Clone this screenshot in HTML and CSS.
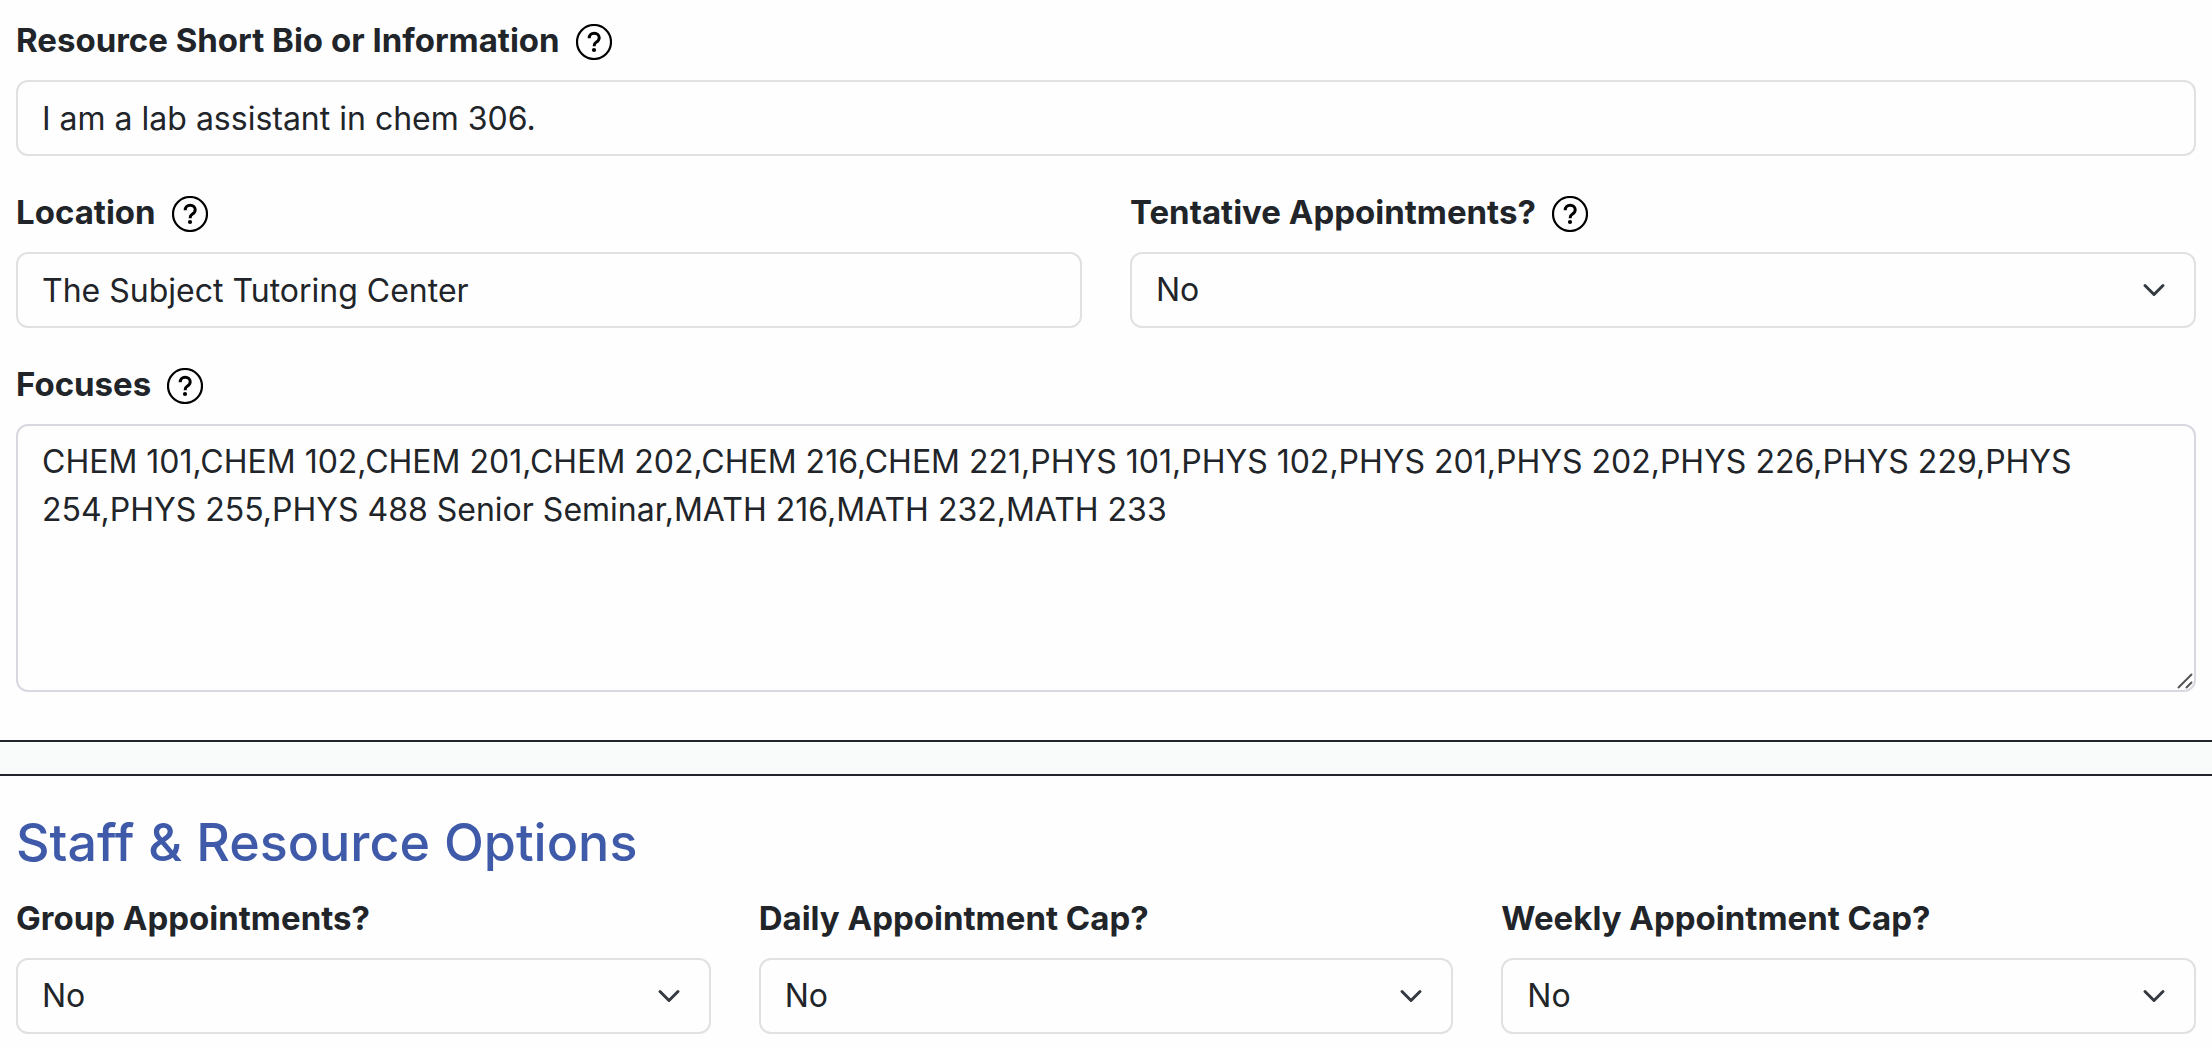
FILE: index.html
```html
<!DOCTYPE html>
<html lang="en">
<head>
<meta charset="utf-8">
<meta name="viewport" content="width=device-width, initial-scale=1">
<title>Staff &amp; Resource Options</title>
<link rel="stylesheet" href="styles.css">
</head>
<body>
<svg class="sprite" aria-hidden="true">
  <symbol id="help-icon" viewBox="0 0 36 36">
    <circle cx="18" cy="18" r="17" fill="none" stroke="currentColor" stroke-width="2.2"/>
    <path d="M13.200 14.200c0-3 2-4.900 5-4.900s5 1.800 5 4.500c0 2-1 3.200-2.700 4.300-1.700 1.100-2.300 1.900-2.300 3.600v.6" fill="none" stroke="currentColor" stroke-width="3"/>
    <circle cx="18" cy="26" r="2.100" fill="currentColor"/>
  </symbol>
</svg>
<form>
  <section class="panel">
    <div class="field">
      <div class="label-row">
        <label for="bio">Resource Short Bio or Information</label>
        <button class="help" type="button" aria-label="Help"><svg><use href="#help-icon"/></svg></button>
      </div>
      <input class="control" id="bio" type="text" value="I am a lab assistant in chem 306.">
    </div>
    <div class="columns two">
      <div class="field">
        <div class="label-row">
          <label for="location">Location</label>
          <button class="help" type="button" aria-label="Help"><svg><use href="#help-icon"/></svg></button>
        </div>
        <input class="control" id="location" type="text" value="The Subject Tutoring Center">
      </div>
      <div class="field">
        <div class="label-row">
          <label for="tentative">Tentative Appointments?</label>
          <button class="help" type="button" aria-label="Help"><svg><use href="#help-icon"/></svg></button>
        </div>
        <select class="control select" id="tentative"><option>No</option><option>Yes</option></select>
      </div>
    </div>
    <div class="field">
      <div class="label-row">
        <label for="focuses">Focuses</label>
        <button class="help" type="button" aria-label="Help"><svg><use href="#help-icon"/></svg></button>
      </div>
      <textarea class="control area" id="focuses" rows="5" spellcheck="false">CHEM 101,CHEM 102,CHEM 201,CHEM 202,CHEM 216,CHEM 221,PHYS 101,PHYS 102,PHYS 201,PHYS 202,PHYS 226,PHYS 229,PHYS 254,PHYS 255,PHYS 488 Senior Seminar,MATH 216,MATH 232,MATH 233</textarea>
    </div>
  </section>
  <div class="divider"></div>
  <section class="panel options">
    <h2 class="title">Staff &amp; Resource Options</h2>
    <div class="columns three">
      <div class="field">
        <div class="label-row"><label for="group">Group Appointments?</label></div>
        <select class="control select" id="group"><option>No</option><option>Yes</option></select>
      </div>
      <div class="field">
        <div class="label-row"><label for="daily">Daily Appointment Cap?</label></div>
        <select class="control select" id="daily"><option>No</option><option>Yes</option></select>
      </div>
      <div class="field">
        <div class="label-row"><label for="weekly">Weekly Appointment Cap?</label></div>
        <select class="control select" id="weekly"><option>No</option><option>Yes</option></select>
      </div>
    </div>
  </section>
</form>
</body>
</html>
```
FILE: styles.css
```css
* {
  box-sizing: border-box;
}

body {
  margin: 0;
  background: #fefefe;
  color: #212529;
  font-family: Inter, "Liberation Sans", sans-serif;
  font-size: 32px;
  line-height: 48px;
}

.sprite {
  display: none;
}

.panel {
  display: flex;
  flex-direction: column;
  gap: 32px;
  padding: 16px 16px 48px;
}

.options {
  gap: 16px;
  padding: 32px 16px 12px;
}

.columns {
  display: grid;
  gap: 48px;
}

.two {
  grid-template-columns: repeat(2, minmax(0, 1fr));
}

.three {
  grid-template-columns: repeat(3, minmax(0, 1fr));
}

.field {
  display: flex;
  flex-direction: column;
  gap: 16px;
}

.label-row {
  display: flex;
  align-items: flex-end;
  gap: 16px;
  height: 48px;
  font-size: 33px;
  font-weight: 700;
}

.help {
  width: 36px;
  height: 36px;
  margin-bottom: 4px;
  padding: 0;
  border: 0;
  background: none;
  color: #000;
}

.help svg {
  display: block;
  width: 36px;
  height: 36px;
}

.control {
  display: block;
  width: 100%;
  height: 76px;
  margin: 0;
  padding: 12px 24px;
  border: 2px solid #dfe1e2;
  border-radius: 12px;
  background-color: #fefefe;
  color: inherit;
  font: inherit;
}

.select {
  appearance: none;
  padding-right: 72px;
  background-image: url("data:image/svg+xml,%3Csvg xmlns='http://www.w3.org/2000/svg' viewBox='0 0 16 16'%3E%3Cpath fill='none' stroke='%23343a40' stroke-linecap='round' stroke-linejoin='round' stroke-width='2' d='m2 5 6 6 6-6'/%3E%3C/svg%3E");
  background-repeat: no-repeat;
  background-position: right 24px center;
  background-size: 32px 24px;
}

.area {
  height: 268px;
  border-color: #d8d9e0;
  resize: vertical;
  background-image: url("data:image/svg+xml,%3Csvg xmlns='http://www.w3.org/2000/svg' viewBox='0 0 18 18'%3E%3Cpath fill='none' stroke='%23555' stroke-width='2' d='M2 16 16 2M10 16l6-6'/%3E%3C/svg%3E");
  background-repeat: no-repeat;
  background-position: right bottom;
  background-size: 18px 18px;
}

.area::-webkit-resizer {
  background: transparent;
}

.divider {
  height: 36px;
  border: solid #212529;
  border-width: 2px 0;
  background: #f9fafa;
}

.title {
  margin: 0;
  color: #3f5aa9;
  font-size: 52px;
  font-weight: 500;
  line-height: 70px;
}
```
